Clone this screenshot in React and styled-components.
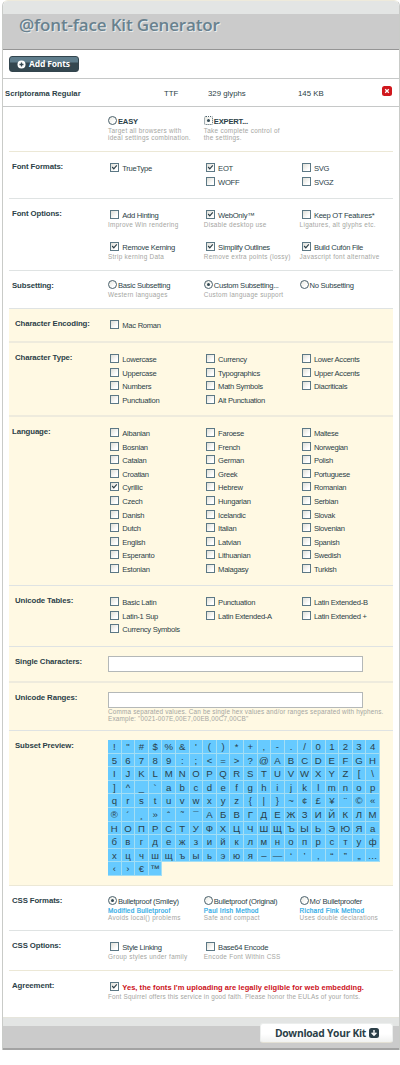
import React from 'react';
import styled, { createGlobalStyle, css } from 'styled-components';

const Global = createGlobalStyle`
  * { box-sizing: border-box; }
  body {
    margin: 0;
    background: #fff;
    font-family: "Liberation Sans", Arial, sans-serif;
    color: #2c3f48;
    overflow-x: hidden;
  }
`;

const Page = styled.div`
  width: 400px;
  height: 1065px;
  overflow: hidden;
  padding-left: 2px;
`;

const Panel = styled.main`
  height: 1050px;
  display: flex;
  flex-direction: column;
  border: 1px solid #c9cbc8;
  border-top-color: #eeeadb;
  border-bottom: 0;
  border-radius: 6px 6px 0 0;
  overflow: hidden;
`;

const Header = styled.header`
  height: 49px;
  flex: none;
  padding: 11px 0 0 16px;
  background: linear-gradient(#e3e5e4 13px, #cbcbcb 13px);
  border-bottom: 1px solid #959595;
`;

const Title = styled.h1`
  margin: 0;
  font: 600 17px/26px "Open Sans", "Noto Sans", sans-serif;
  letter-spacing: -0.16px;
  color: #68818e;
  text-shadow: 1px 1px 0 #e9ecec;
  white-space: nowrap;
`;

const Toolbar = styled.div`
  height: 29px;
  flex: none;
  padding: 6px 6px 0;
  border-bottom: 1px solid #c6c8c8;
`;

const AddButton = styled.button`
  display: flex;
  align-items: center;
  gap: 3px;
  width: 70px;
  height: 16px;
  padding: 0 0 0 7px;
  border: 1px solid #33454e;
  border-radius: 3px;
  background: linear-gradient(#5f7d8c 5px, #344750 6px);
  color: #fff;
  font: 700 8.5px/14px "Open Sans", "Noto Sans", sans-serif;
  letter-spacing: -0.15px;
  white-space: nowrap;
`;

const FontRow = styled.div`
  display: grid;
  grid-template-columns: 159px 44px 90px 84px 1fr;
  height: 28px;
  flex: none;
  padding: 1px 0 0 2px;
  align-items: center;
  border-bottom: 1px solid #c6c8c8;
  font-size: 7.8px;
  white-space: nowrap;
`;

const FontName = styled.strong`
  font-size: 7.7px;
`;

const Remove = styled.button`
  width: 10px;
  height: 10px;
  margin-bottom: 4px;
  padding: 0;
  display: grid;
  place-items: center;
  border: 0;
  border-radius: 2.5px;
  background: #d0171d;
`;

const Section = styled.section`
  display: grid;
  grid-template-columns: 99px 1fr;
  flex: none;
  width: 384px;
  height: ${(p) => p.$h}px;
  margin-left: 6px;
  background: ${(p) => (p.$tint ? '#fff9e3' : 'transparent')};
  border-bottom: ${(p) => p.$rule || '1px solid #dfe3e3'};
`;

const SectionLabel = styled.h2`
  margin: 0;
  padding: 9px 0 0 ${(p) => (p.$indent ? 6 : 3)}px;
  font-size: 7.8px;
  line-height: 12px;
  font-weight: 700;
  letter-spacing: -0.1px;
  white-space: nowrap;
`;

const Columns = styled.div`
  display: grid;
  grid-template-columns: repeat(3, 95.8px);
  padding-top: ${(p) => p.$top ?? 11}px;
  align-items: start;
  align-content: start;
`;

const Column = styled.div`
  display: flex;
  flex-direction: column;
`;

const Item = styled.label`
  display: block;
  height: ${(p) => p.$pitch || 13.62}px;
  white-space: nowrap;
`;

const Line = styled.span`
  display: flex;
  gap: ${(p) => (p.$radio ? 1 : 3.3)}px;
  padding-left: ${(p) => (p.$radio ? 0 : 2)}px;
`;

const Caption = styled.span`
  font-size: 7.6px;
  line-height: 12px;
  letter-spacing: -0.28px;
  ${(p) => p.$strong && css`
    font-weight: 700;
    letter-spacing: -0.2px;
  `}
  ${(p) => p.$alert && css`
    font-size: 7.5px;
    color: #cc1119;
    font-weight: 700;
    letter-spacing: 0.04px;
  `}
`;

const Box = styled.span`
  display: grid;
  place-items: center;
  flex: none;
  width: 9px;
  height: 9px;
  border: 1px solid #5c7885;
  background: linear-gradient(135deg, #dfdfd8, #fff 75%);
`;

const Dot = styled.span`
  display: grid;
  place-items: center;
  flex: none;
  width: 9px;
  height: 9px;
  border: 1px ${(p) => (p.$focus ? 'dotted' : 'solid')} #4a606b;
  border-radius: ${(p) => (p.$focus ? '2px' : '50%')};
  background: linear-gradient(135deg, #e8e8e0, #fff 70%);
  &::after {
    content: "";
    width: 3px;
    height: 3px;
    border-radius: 50%;
    background: ${(p) => (p.$on ? '#344b56' : 'transparent')};
  }
`;

const Note = styled.span`
  display: block;
  font-size: 6.4px;
  line-height: 6.5px;
  letter-spacing: ${(p) => (p.$long ? 0.18 : 0.28)}px;
  color: #a5a6a2;
  white-space: nowrap;
`;

const Method = styled.a`
  display: block;
  font-size: 6.4px;
  line-height: 6.5px;
  letter-spacing: 0.3px;
  color: #27a9e6;
  -webkit-text-stroke: 0.2px #27a9e6;
`;

const Field = styled.div`
  padding-top: 9px;
`;

const TextInput = styled.input`
  display: block;
  width: 255px;
  height: 16px;
  margin-bottom: 1px;
  border: 1px solid #b4b8b8;
  border-radius: 0;
  background: #fff;
`;

const Glyphs = styled.div`
  display: grid;
  grid-template-columns: repeat(20, 13.6px);
  grid-auto-rows: 13.62px;
  align-content: start;
  padding-top: 9px;
`;

const Glyph = styled.span`
  border: solid #a3def4;
  border-width: 0 1px 1px 0;
  background: #66caff;
  color: #2a3f4b;
  font-size: 9.6px;
  line-height: 13px;
  text-align: center;
`;

const Footer = styled.footer`
  display: flex;
  justify-content: flex-end;
  align-items: flex-start;
  flex: 1;
  padding: 5px 6px 0 0;
  border-top: 1px solid #e6e5dc;
  border-bottom: 2px solid #a3a3a3;
  background: linear-gradient(#e3e5e4 8px, #cbcbcb 8px);
`;

const Download = styled.button`
  display: flex;
  align-items: center;
  justify-content: center;
  gap: 3px;
  width: 133px;
  height: 20px;
  padding: 0 0 0 1px;
  border: 1px solid #eceeed;
  border-bottom-color: #e3e0d4;
  border-radius: 3px;
  background: linear-gradient(#fff 55%, #f1f2f1);
  color: #2c3f48;
  font: 700 10.3px/17px "Open Sans", "Noto Sans", sans-serif;
  letter-spacing: -0.28px;
  white-space: nowrap;
`;

const Check = () => (
  <svg width="7" height="7" viewBox="0 0 7 7" fill="none" stroke="#2c3f48" strokeWidth="1.2">
    <path d="M1.2 3 L2.8 4.8 L5.8 1.4" />
  </svg>
);

const PlusBadge = () => (
  <svg width="9" height="9" viewBox="0 0 9 9">
    <circle cx="4.5" cy="4.5" r="4" fill="#fff" />
    <path d="M4.5 2.5v4M2.5 4.5h4" stroke="#344750" strokeWidth="1.3" />
  </svg>
);

const Cross = () => (
  <svg width="6" height="6" viewBox="0 0 6 6">
    <path d="M1.2 1.2l3.6 3.6M4.8 1.2L1.2 4.8" stroke="#fff" strokeWidth="1.3" />
  </svg>
);

const DownBadge = () => (
  <svg width="10" height="10" viewBox="0 0 10 10">
    <rect width="10" height="10" rx="2.5" fill="#2c3f48" />
    <path d="M5 2v5M2.6 4.8L5 7.3l2.4-2.5" fill="none" stroke="#fff" strokeWidth="1.4" />
  </svg>
);

function Option({ text, on, radio, focus, strong, alert, method, notes = [], pitch }) {
  return (
    <Item $pitch={pitch}>
      <Line $radio={radio}>
        {radio ? <Dot $on={on} $focus={focus} /> : <Box>{on && <Check />}</Box>}
        <Caption $strong={strong} $alert={alert}>{text}</Caption>
      </Line>
      {method && <Method>{method}</Method>}
      {notes.map((n) => <Note key={n} $long={n.length > 40}>{n}</Note>)}
    </Item>
  );
}

function Options({ columns, top, pitch }) {
  return (
    <Columns $top={top}>
      {columns.map((items, i) => (
        <Column key={i}>
          {items.map((it) => {
            const props = typeof it === 'string' ? { text: it } : it;
            return <Option key={props.text} pitch={pitch} {...props} />;
          })}
        </Column>
      ))}
    </Columns>
  );
}

function Group({ label, h, tint, indent, rule, children }) {
  return (
    <Section $h={h} $tint={tint} $rule={rule}>
      <SectionLabel $indent={indent}>{label}</SectionLabel>
      {children}
    </Section>
  );
}

const thick = '2px solid #eeebdd';
const cream = '1px solid #ece8d6';
const none = '0';

const glyphs = [
  ...'!"#$%&\'()*+,-./01234',
  ...'56789:;<=>?@ABCDEFGH',
  ...'IJKLMNOPQRSTUVWXYZ[\\',
  ...']^_`abcdefghijklmnop',
  ...'qrstuvwxyz{|}~¢£¥¨©«',
  ...'®´¸»ˆ˜¯АБВГДЕЖЗИЙКЛМ',
  ...'НОПРСТУФХЦЧШЩЪЫЬЭЮЯа',
  ...'бвгдежзийклмнопрстуф',
  ...'хцчшщъыьэюя–—‘’‚“”„…',
  ...'‹›€™',
];

export default function App() {
  return (
    <Page>
      <Global />
      <Panel>
        <Header><Title>@font-face Kit Generator</Title></Header>
        <Toolbar><AddButton><PlusBadge />Add Fonts</AddButton></Toolbar>
        <FontRow>
          <FontName>Scriptorama Regular</FontName>
          <span>TTF</span>
          <span>329 glyphs</span>
          <span>145 KB</span>
          <Remove aria-label="Remove"><Cross /></Remove>
        </FontRow>

        <Group h={45} rule={cream}>
          <Options top={9} pitch={30} columns={[
            [{ text: 'EASY', radio: true, strong: true, notes: ['Target all browsers with', 'ideal settings combination.'] }],
            [{ text: 'EXPERT...', radio: true, on: true, focus: true, strong: true, notes: ['Take complete control of', 'the settings.'] }],
          ]} />
        </Group>
        <Group label="Font Formats:" h={47}>
          <Options columns={[
            [{ text: 'TrueType', on: true }],
            [{ text: 'EOT', on: true }, 'WOFF'],
            ['SVG', 'SVGZ'],
          ]} />
        </Group>
        <Group label="Font Options:" h={72}>
          <Options pitch={32} columns={[
            [{ text: 'Add Hinting', notes: ['Improve Win rendering'] }, { text: 'Remove Kerning', on: true, notes: ['Strip kerning Data'] }],
            [{ text: 'WebOnly™', on: true, notes: ['Disable desktop use'] }, { text: 'Simplify Outlines', on: true, notes: ['Remove extra points (lossy)'] }],
            [{ text: 'Keep OT Features*', notes: ['Ligatures, alt glyphs etc.'] }, { text: 'Build Cufón File', on: true, notes: ['Javascript font alternative'] }],
          ]} />
        </Group>
        <Group label="Subsetting:" h={38}>
          <Options top={9} columns={[
            [{ text: 'Basic Subsetting', radio: true, notes: ['Western languages'] }],
            [{ text: 'Custom Subsetting...', radio: true, on: true, notes: ['Custom language support'] }],
            [{ text: 'No Subsetting', radio: true }],
          ]} />
        </Group>

        <Group label="Character Encoding:" h={34} tint indent rule={thick}>
          <Options columns={[['Mac Roman']]} />
        </Group>
        <Group label="Character Type:" h={74} tint indent rule={thick}>
          <Options columns={[
            ['Lowercase', 'Uppercase', 'Numbers', 'Punctuation'],
            ['Currency', 'Typographics', 'Math Symbols', 'Alt Punctuation'],
            ['Lower Accents', 'Upper Accents', 'Diacriticals'],
          ]} />
        </Group>
        <Group label="Language:" h={169} tint>
          <Options columns={[
            ['Albanian', 'Bosnian', 'Catalan', 'Croatian', { text: 'Cyrillic', on: true }, 'Czech', 'Danish', 'Dutch', 'English', 'Esperanto', 'Estonian'],
            ['Faroese', 'French', 'German', 'Greek', 'Hebrew', 'Hungarian', 'Icelandic', 'Italian', 'Latvian', 'Lithuanian', 'Malagasy'],
            ['Maltese', 'Norwegian', 'Polish', 'Portuguese', 'Romanian', 'Serbian', 'Slovak', 'Slovenian', 'Spanish', 'Swedish', 'Turkish'],
          ]} />
        </Group>
        <Group label="Unicode Tables:" h={61} tint indent>
          <Options columns={[
            ['Basic Latin', 'Latin-1 Sup', 'Currency Symbols'],
            ['Punctuation', 'Latin Extended-A'],
            ['Latin Extended-B', 'Latin Extended +'],
          ]} />
        </Group>
        <Group label="Single Characters:" h={36} tint indent rule={thick}>
          <Field><TextInput aria-label="Single Characters" /></Field>
        </Group>
        <Group label="Unicode Ranges:" h={48} tint indent>
          <Field>
            <TextInput aria-label="Unicode Ranges" />
            <Note $long>Comma separated values. Can be single hex values and/or ranges separated with hyphens.</Note>
            <Note $long>Example: "0021-007E,00E7,00EB,00C7,00CB"</Note>
          </Field>
        </Group>
        <Group label="Subset Preview:" h={155} tint indent rule={cream}>
          <Glyphs>{glyphs.map((g, i) => <Glyph key={i}>{g}</Glyph>)}</Glyphs>
        </Group>

        <Group label="CSS Formats:" h={45}>
          <Options top={10} columns={[
            [{ text: 'Bulletproof (Smiley)', radio: true, on: true, method: 'Modified Bulletproof', notes: ['Avoids local() problems'] }],
            [{ text: 'Bulletproof (Original)', radio: true, method: 'Paul Irish Method', notes: ['Safe and compact'] }],
            [{ text: "Mo' Bulletproofer", radio: true, method: 'Richard Fink Method', notes: ['Uses double declarations'] }],
          ]} />
        </Group>
        <Group label="CSS Options:" h={40} rule={cream}>
          <Options columns={[
            [{ text: 'Style Linking', notes: ['Group styles under family'] }],
            [{ text: 'Base64 Encode', notes: ['Encode Font Within CSS'] }],
          ]} />
        </Group>
        <Group label="Agreement:" h={46} rule={none}>
          <Options columns={[
            [{
              text: "Yes, the fonts I'm uploading are legally eligible for web embedding.",
              on: true,
              alert: true,
              notes: ['Font Squirrel offers this service in good faith. Please honor the EULAs of your fonts.'],
            }],
          ]} />
        </Group>
        <Footer><Download>Download Your Kit<DownBadge /></Download></Footer>
      </Panel>
    </Page>
  );
}
